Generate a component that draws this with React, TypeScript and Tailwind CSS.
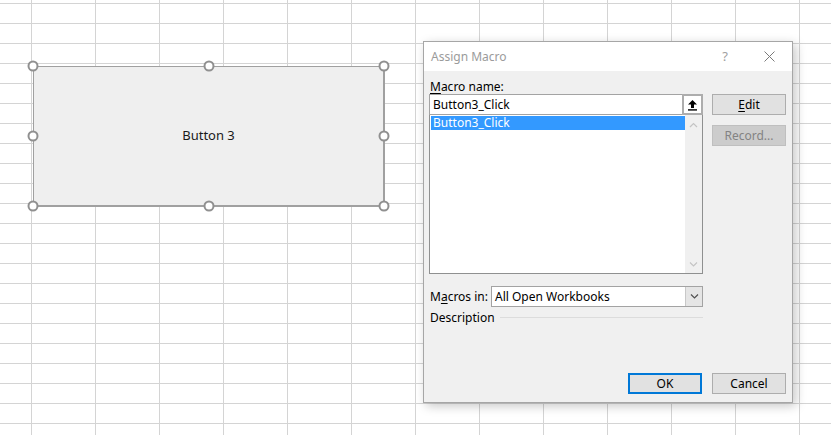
import React from "react";

const ui = { fontFamily: '"Noto Sans", "Open Sans", Arial, sans-serif' };

function Chevron({ dir, color }: { dir: "up" | "down"; color: string }) {
  const d = dir === "up" ? "M1 5 L4.5 1.5 L8 5" : "M1 1.5 L4.5 5 L8 1.5";
  return (
    <svg width="9" height="7" viewBox="0 0 9 7">
      <path d={d} fill="none" stroke={color} strokeWidth="1.2" />
    </svg>
  );
}

function Handle({ className }: { className: string }) {
  return (
    <div
      className={`absolute w-[11px] h-[11px] -translate-x-1/2 -translate-y-1/2 rounded-full border-2 border-[#909090] bg-white ${className}`}
    />
  );
}

function SheetButton() {
  return (
    <div className="absolute left-[33px] top-[66px] w-[352px] h-[141px]">
      <div className="w-full h-full bg-[#efefef] border-t border-l border-r-2 border-b-2 border-[#a0a0a0] flex items-center justify-center">
        <span className="text-[13px] text-[#1a1a1a]" style={ui}>
          Button 3
        </span>
      </div>
      <Handle className="left-0 top-0" />
      <Handle className="left-[176px] top-0" />
      <Handle className="left-[351px] top-0" />
      <Handle className="left-0 top-[70px]" />
      <Handle className="left-[351px] top-[70px]" />
      <Handle className="left-0 top-[140px]" />
      <Handle className="left-[176px] top-[140px]" />
      <Handle className="left-[351px] top-[140px]" />
    </div>
  );
}

function DlgButton({
  children,
  variant = "normal",
}: {
  children: React.ReactNode;
  variant?: "normal" | "default" | "disabled";
}) {
  const look =
    variant === "default"
      ? "border-2 border-[#0078d7] bg-[#e1e1e1] text-black"
      : variant === "disabled"
      ? "border border-[#bfbfbf] bg-[#cccccc] text-[#838383]"
      : "border border-[#adadad] bg-[#e1e1e1] text-black";
  return (
    <div className={`w-[74px] h-[21px] flex items-center justify-center text-[12px] ${look}`}>
      {children}
    </div>
  );
}

function AssignMacroDialog() {
  return (
    <div
      className="absolute left-[423px] top-[41px] w-[370px] h-[362px] border border-[#a6a6a6] bg-[#f0f0f0] flex flex-col shadow-[3px_3px_10px_rgba(0,0,0,0.22)]"
      style={ui}
    >
      <div className="h-[29px] bg-white flex items-center pl-[7px] text-[12px] text-[#9b9b9b]">
        <span>Assign Macro</span>
        <span className="ml-auto text-[13px] text-[#a0a0a0]">?</span>
        <svg className="ml-[36px] mr-[17px]" width="11" height="11" viewBox="0 0 11 11">
          <path d="M0.5 0.5 L10.5 10.5 M10.5 0.5 L0.5 10.5" stroke="#7a7a7a" strokeWidth="1" />
        </svg>
      </div>

      <div className="flex-1 flex flex-col pl-[5px] pr-[6px] pt-[8px] pb-[8px] text-[12px] text-black">
        <div className="flex gap-[9px]">
          <div className="w-[274px] flex flex-col">
            <div className="h-[15px] leading-[15px] pl-[1px]">
              <span className="underline underline-offset-2">M</span>acro name:
            </div>
            <div className="h-[21px] border border-[#a3a3a3] bg-white flex items-center">
              <span className="pl-[3px] flex-1">Button3_Click</span>
              <div className="w-[21px] h-[21px] -mr-px -my-px border-2 border-[#adadad] bg-white flex items-center justify-center">
                <svg width="11" height="12" viewBox="0 0 11 12">
                  <path d="M5.5 1 L10 5.5 L7 5.5 L7 9 L4 9 L4 5.5 L1 5.5 Z" fill="#000" />
                  <rect x="1" y="10.2" width="9" height="1.4" fill="#000" />
                </svg>
              </div>
            </div>
            <div className="h-[159px] border border-t-0 border-[#8f9090] bg-white flex">
              <div className="flex-1 pl-[1px] pt-px">
                <div className="h-[14px] leading-[14px] bg-[#3399ff] text-white pl-[2px]">Button3_Click</div>
              </div>
              <div className="w-[17px] bg-[#f0f0f0] flex flex-col items-center justify-between pt-[7px] pb-[5px]">
                <Chevron dir="up" color="#c4c4c4" />
                <Chevron dir="down" color="#c4c4c4" />
              </div>
            </div>
          </div>
          <div className="w-[74px] pt-[15px] flex flex-col gap-[10px]">
            <DlgButton>
              <span className="underline underline-offset-2">E</span>dit
            </DlgButton>
            <DlgButton variant="disabled">Record...</DlgButton>
          </div>
        </div>

        <div className="mt-[12px] w-[274px] flex items-center">
          <div className="w-[62px] pl-[1px]">
            M<span className="underline underline-offset-2">a</span>cros in:
          </div>
          <div className="flex-1 h-[21px] border border-[#a3a3a3] bg-white flex items-center">
            <span className="pl-[3px] flex-1">All Open Workbooks</span>
            <div className="w-[17px] h-full bg-[#e5e5e5] border-l border-[#c8c8c8] flex items-center justify-center">
              <Chevron dir="down" color="#505050" />
            </div>
          </div>
        </div>

        <div className="mt-[3px] w-[274px] h-[15px] flex items-center">
          <span className="pl-[1px]">Description</span>
          <div className="flex-1 ml-[5px] h-px bg-[#dcdcdc]" />
        </div>

        <div className="mt-auto flex justify-end gap-[10px]">
          <DlgButton variant="default">OK</DlgButton>
          <DlgButton>Cancel</DlgButton>
        </div>
      </div>
    </div>
  );
}

export default function App() {
  return (
    <div className="relative w-[831px] h-[435px] overflow-hidden bg-white bg-[linear-gradient(to_right,#d4d4d4_1px,transparent_1px),linear-gradient(to_bottom,#d4d4d4_1px,transparent_1px)] bg-size-[64px_20px] bg-position-[31px_3px]">
      <SheetButton />
      <AssignMacroDialog />
    </div>
  );
}
